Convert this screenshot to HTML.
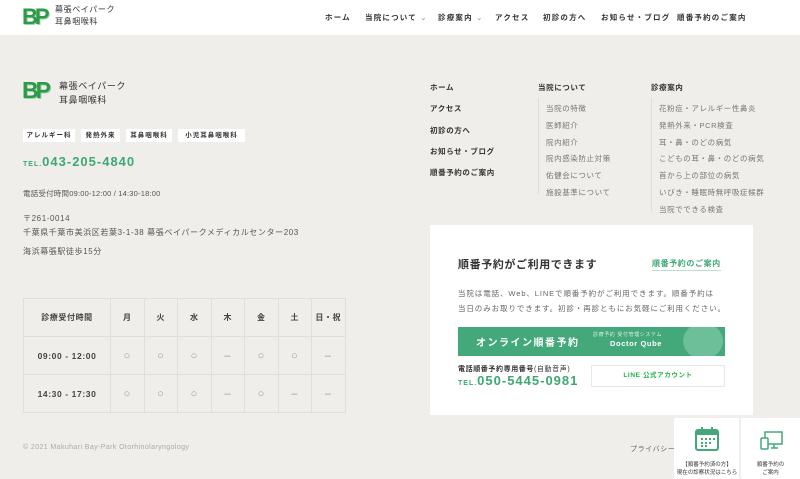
<!DOCTYPE html>
<html><head><meta charset="utf-8"><style>
*{margin:0;padding:0;box-sizing:border-box}
body{width:800px;height:479px;overflow:hidden;background:#f0eeeb;font-family:"Liberation Sans","Noto Sans CJK JP",sans-serif;color:#444;position:relative;letter-spacing:.6px}
.a{position:absolute;white-space:nowrap}
header{position:absolute;left:0;top:0;width:800px;height:35px;background:#fff}
.bp{font-family:"Liberation Sans",sans-serif;font-weight:bold;color:#2e9a47;letter-spacing:-3px;text-shadow:1px 1px 0 #9fd3ad}
.nav{font-size:7.5px;font-weight:bold;color:#333;top:12px;letter-spacing:1.2px}
.tag{background:#fff;font-size:6.5px;font-weight:bold;color:#333;height:13px;line-height:13px;top:129px;letter-spacing:1px;text-align:center}
.g{color:#3ea873}
.fl{font-size:7.5px;font-weight:bold;color:#333}
.fs{font-size:7.5px;color:#777}
table{position:absolute;left:23px;top:298px;border-collapse:collapse}
td{border:1px solid #e2dfdb;text-align:center;font-size:8px;font-weight:bold;color:#444;height:38px;width:33.5px}
td.o{color:#999;font-weight:normal;font-size:11px}
</style></head><body>
<header>
<div class="a bp" style="left:22px;top:4px;font-size:22px">BP</div>
<div class="a" style="left:55px;top:4px;font-size:8px;line-height:12px;color:#333">幕張ベイパーク<br>耳鼻咽喉科</div>
<div class="a nav" style="left:325px">ホーム</div>
<div class="a nav" style="left:365px">当院について <span style="font-weight:normal;color:#888">⌄</span></div>
<div class="a nav" style="left:438px">診療案内 <span style="font-weight:normal;color:#888">⌄</span></div>
<div class="a nav" style="left:495px">アクセス</div>
<div class="a nav" style="left:543px">初診の方へ</div>
<div class="a nav" style="left:601px">お知らせ・ブログ</div>
<div class="a nav" style="left:677px">順番予約のご案内</div>
</header>
<div class="a bp" style="left:22px;top:77px;font-size:23px">BP</div>
<div class="a" style="left:59px;top:79px;font-size:9px;line-height:14px;color:#333">幕張ベイパーク<br>耳鼻咽喉科</div>
<div class="a tag" style="left:23px;width:52px">アレルギー科</div>
<div class="a tag" style="left:81px;width:39px">発熱外来</div>
<div class="a tag" style="left:126px;width:46px">耳鼻咽喉科</div>
<div class="a tag" style="left:178px;width:67px">小児耳鼻咽喉科</div>
<div class="a g" style="left:23px;top:154px;font-size:13px;font-weight:bold;letter-spacing:1px"><span style="font-size:7px">TEL.</span>043-205-4840</div>
<div class="a" style="left:23px;top:188px;font-size:7.5px;color:#555;letter-spacing:.2px">電話受付時間09:00-12:00 / 14:30-18:00</div>
<div class="a" style="left:23px;top:212px;font-size:8px;line-height:14px;color:#555">〒261-0014<br>千葉県千葉市美浜区若葉3-1-38 幕張ベイパークメディカルセンター203</div>
<div class="a" style="left:23px;top:246px;font-size:8px;color:#555">海浜幕張駅徒歩15分</div>
<table>
<tr><td style="width:87px">診療受付時間</td><td>月</td><td>火</td><td>水</td><td>木</td><td>金</td><td>土</td><td>日・祝</td></tr>
<tr><td style="font-size:8.5px">09:00 - 12:00</td><td class="o">○</td><td class="o">○</td><td class="o">○</td><td class="o">–</td><td class="o">○</td><td class="o">○</td><td class="o">–</td></tr>
<tr><td style="font-size:8.5px">14:30 - 17:30</td><td class="o">○</td><td class="o">○</td><td class="o">○</td><td class="o">–</td><td class="o">○</td><td class="o">–</td><td class="o">–</td></tr>
</table>
<div class="a" style="left:23px;top:444px;font-size:7px;color:#aaa;letter-spacing:.4px">© 2021 Makuhari Bay-Park Otorhinolaryngology</div>

<div class="a fl" style="left:430px;top:82px">ホーム</div>
<div class="a fl" style="left:430px;top:103px">アクセス</div>
<div class="a fl" style="left:430px;top:125px">初診の方へ</div>
<div class="a fl" style="left:430px;top:146px">お知らせ・ブログ</div>
<div class="a fl" style="left:430px;top:167px">順番予約のご案内</div>
<div class="a fl" style="left:538px;top:82px">当院について</div>
<div class="a" style="left:538px;top:98px;width:1px;height:96px;background:#e0ddd8"></div>
<div class="a fs" style="left:546px;top:101px;line-height:16.8px">当院の特徴<br>医師紹介<br>院内紹介<br>院内感染防止対策<br>佑健会について<br>施設基準について</div>
<div class="a fl" style="left:651px;top:82px">診療案内</div>
<div class="a" style="left:651px;top:98px;width:1px;height:113px;background:#e0ddd8"></div>
<div class="a fs" style="left:659px;top:101px;line-height:16.8px">花粉症・アレルギー性鼻炎<br>発熱外来・PCR検査<br>耳・鼻・のどの病気<br>こどもの耳・鼻・のどの病気<br>首から上の部位の病気<br>いびき・睡眠時無呼吸症候群<br>当院でできる検査</div>

<div class="a" style="left:430px;top:225px;width:323px;height:190px;background:#fff"></div>
<div class="a" style="left:458px;top:256px;font-size:11px;font-weight:bold;color:#333">順番予約がご利用できます</div>
<div class="a g" style="left:652px;top:258px;font-size:8px;font-weight:bold;border-bottom:1px solid #b8e0cb;padding-bottom:1px">順番予約のご案内</div>
<div class="a" style="left:458px;top:286px;font-size:7.5px;line-height:15px;color:#666;letter-spacing:.9px">当院は電話、Web、LINEで順番予約がご利用できます。順番予約は<br>当日のみお取りできます。初診・再診ともにお気軽にご利用ください。</div>
<div class="a" style="left:458px;top:327px;width:267px;height:29px;background:#43a87a;overflow:hidden">
<div class="a" style="left:18px;top:7px;font-size:10px;font-weight:bold;color:#fff;letter-spacing:1.5px">オンライン順番予約</div>
<div class="a" style="left:135px;top:4px;font-size:5px;color:#d8f0e4">診療予約 受付管理システム</div>
<div class="a" style="left:152px;top:12px;font-size:7.5px;font-weight:bold;color:#fff">Doctor Qube</div>
<div class="a" style="left:225px;top:-4px;width:40px;height:36px;border-radius:50%;background:#6cbf98"></div>
</div>
<div class="a" style="left:458px;top:364px;font-size:7px;font-weight:bold;color:#333">電話順番予約専用番号<span style="font-weight:normal">(自動音声)</span></div>
<div class="a g" style="left:458px;top:373px;font-size:13px;font-weight:bold;letter-spacing:1px"><span style="font-size:7px">TEL.</span>050-5445-0981</div>
<div class="a" style="left:591px;top:365px;width:134px;height:22px;border:1px solid #e8e8e8;background:#fff;text-align:center;line-height:20px;font-size:6.5px;font-weight:bold;color:#1db446">LINE 公式アカウント</div>

<div class="a" style="left:630px;top:444px;font-size:7px;color:#666">プライバシー</div>
<div class="a" style="left:674px;top:418px;width:66px;height:61px;background:#fff;border-right:1px solid #eee"></div>
<div class="a" style="left:741px;top:418px;width:59px;height:61px;background:#fff"></div>
<svg class="a" style="left:694px;top:426px" width="26" height="26" viewBox="0 0 26 26"><rect x="2" y="4" width="22" height="20" rx="2" fill="none" stroke="#43a87a" stroke-width="2"/><rect x="2" y="4" width="22" height="5" fill="#43a87a"/><rect x="7" y="1" width="2" height="6" fill="#43a87a"/><rect x="17" y="1" width="2" height="6" fill="#43a87a"/><g fill="#43a87a"><rect x="7" y="12" width="2" height="2"/><rect x="11" y="12" width="2" height="2"/><rect x="15" y="12" width="2" height="2"/><rect x="19" y="12" width="2" height="2"/><rect x="7" y="16" width="2" height="2"/><rect x="11" y="16" width="2" height="2"/><rect x="15" y="16" width="2" height="2"/><rect x="7" y="19" width="2" height="2"/><rect x="11" y="19" width="2" height="2"/></g></svg>
<div class="a" style="left:674px;top:461px;width:66px;text-align:center;font-size:5.5px;line-height:8px;color:#333;letter-spacing:0">【順番予約済の方】<br>現在の診察状況はこちら</div>
<svg class="a" style="left:760px;top:430px" width="24" height="22" viewBox="0 0 24 22"><rect x="5" y="2" width="17" height="12" fill="none" stroke="#43a87a" stroke-width="1.5"/><path d="M11 18h7M14 14v4" stroke="#43a87a" stroke-width="1.5"/><rect x="1" y="8" width="7" height="11" rx="1" fill="#fff" stroke="#43a87a" stroke-width="1.5"/></svg>
<div class="a" style="left:741px;top:461px;width:59px;text-align:center;font-size:5.5px;line-height:8px;color:#333;letter-spacing:0">順番予約の<br>ご案内</div>
</body></html>
